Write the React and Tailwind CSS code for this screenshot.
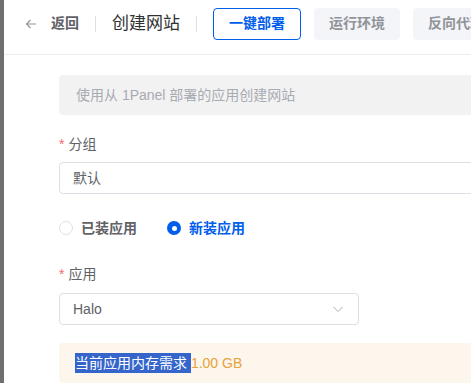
import React from "react";

const font = { fontFamily: '"Liberation Sans", "Noto Sans CJK SC", sans-serif' };

function Chevron() {
  return (
    <svg className="shrink-0" width="12" height="12" viewBox="0 0 12 12" fill="none" stroke="#a8abb2" strokeWidth="1">
      <path d="M1.5 4l4.5 4.5L10.5 4" />
    </svg>
  );
}

function BackArrow() {
  return (
    <svg className="shrink-0" width="12" height="12" viewBox="0 0 12 12" fill="none" stroke="#909399" strokeWidth="1.1">
      <path d="M11 6H1.5M5.5 2L1.5 6l4 4" />
    </svg>
  );
}

export default function App() {
  return (
    <div className="flex w-[471px] h-[383px] overflow-hidden bg-white" style={font}>
      <div className="w-[4px] shrink-0 bg-[#6f6f6f]" />
      <div className="flex-1 min-w-0">
        {/* header */}
        <div className="flex items-center h-[55px] pb-[7px] pl-[21px] border-b border-[#ededed] whitespace-nowrap">
          <BackArrow />
          <span className="shrink-0 ml-[14px] text-[14px] font-bold text-[#606266]">返回</span>
          <span className="shrink-0 mx-[16px] w-px h-[16px] bg-[#dcdfe6]" />
          <span className="shrink-0 text-[17px] text-[#303133]">创建网站</span>
          <span className="shrink-0 mx-[16px] w-px h-[16px] bg-[#dcdfe6]" />
          <div className="shrink-0 flex gap-[13px]">
            <button className="w-[88px] h-[32px] rounded-[4px] border border-[#005eeb] text-[#005eeb] text-[14px] font-bold">一键部署</button>
            <button className="w-[86px] h-[32px] rounded-[4px] bg-[#f4f5f8] text-[#909399] text-[14px] font-bold">运行环境</button>
            <button className="w-[86px] h-[32px] rounded-[4px] bg-[#f4f5f8] text-[#909399] text-[14px] font-bold">反向代理</button>
          </div>
        </div>

        {/* body */}
        <div className="pl-[55px] pt-[20px] w-[600px]">
          <div className="h-[40px] flex items-center pl-[17px] rounded-[4px] bg-[#f2f2f2] text-[14px] text-[#a8abb2]">
            使用从 1Panel 部署的应用创建网站
          </div>

          <div className="mt-[18px] h-[22px] flex items-center text-[14px] text-[#606266]">
            <span className="text-[#f56c6c] mr-[4px]">*</span>分组
          </div>
          <div className="mt-[7px] h-[32px] flex items-center pl-[13px] border border-[#dcdfe6] rounded-[4px] text-[14px] text-[#606266]">
            默认
          </div>

          <div className="mt-[18px] h-[32px] flex items-center text-[14px] font-bold">
            <span className="shrink-0 w-[14px] h-[14px] rounded-full border border-[#dcdfe6]" />
            <span className="ml-[8px] text-[#606266]">已装应用</span>
            <span className="shrink-0 ml-[30px] w-[14px] h-[14px] rounded-full bg-[#005eeb] flex items-center justify-center">
              <span className="w-[5px] h-[5px] rounded-full bg-white" />
            </span>
            <span className="ml-[8px] text-[#005eeb]">新装应用</span>
          </div>

          <div className="mt-[19px] h-[22px] flex items-center text-[14px] text-[#606266]">
            <span className="text-[#f56c6c] mr-[4px]">*</span>应用
          </div>
          <div className="mt-[8px] w-[300px] h-[32px] flex items-center justify-between pl-[13px] pr-[14px] border border-[#dcdfe6] rounded-[4px] text-[14px] text-[#606266]">
            <span>Halo</span>
            <Chevron />
          </div>

          <div className="mt-[18px] h-[40px] flex items-center pl-[16px] rounded-[4px] bg-[#fdf6ec] text-[14px] text-[#e6a23c]">
            <p>
              <span className="bg-[#3565cb] text-white leading-[23px] py-[2px]">当前应用内存需求 </span>
              1.00 GB
            </p>
          </div>
        </div>
      </div>
    </div>
  );
}
